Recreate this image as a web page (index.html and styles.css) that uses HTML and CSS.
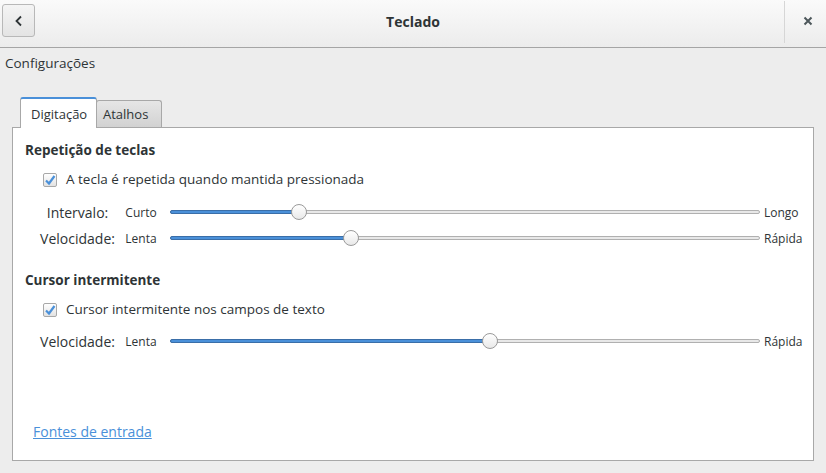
FILE: index.html
```html
<!DOCTYPE html>
<html lang="pt">
<head>
<meta charset="utf-8">
<title>Teclado</title>
<link rel="stylesheet" href="styles.css">
</head>
<body>
<div class="window">
  <header class="headerbar">
    <div class="hb-start">
      <button class="back-btn" aria-label="Voltar">
        <svg width="12" height="12" viewBox="0 0 12 12"><path d="M8 1.5 L3.5 6 L8 10.5" fill="none" stroke="#2e3436" stroke-width="1.8"/></svg>
      </button>
    </div>
    <div class="title">Teclado</div>
    <div class="hb-end">
      <div class="sep"></div>
      <button class="close-btn" aria-label="Fechar">
        <svg width="10" height="10" viewBox="0 0 10 10"><path d="M1.5 1.5 L8.5 8.5 M8.5 1.5 L1.5 8.5" stroke="#4d575b" stroke-width="2"/></svg>
      </button>
    </div>
  </header>

  <div class="section-title">Configurações</div>

  <div class="notebook">
    <div class="tabs">
      <div class="tab active">Digitação</div>
      <div class="tab">Atalhos</div>
    </div>
    <div class="page">
      <div class="group-title">Repetição de teclas</div>
      <label class="check-row">
        <span class="checkbox"><svg width="12" height="12" viewBox="0 0 12 12"><path d="M2 6.5 L5 9.5 L10.5 2" fill="none" stroke="#4a90d9" stroke-width="2.2"/></svg></span>
        A tecla é repetida quando mantida pressionada
      </label>
      <div class="slider-row first">
        <span class="lbl">Intervalo:</span>
        <span class="min">Curto</span>
        <div class="track"><div class="fill" style="width:128px"></div><div class="knob" style="left:128px"></div></div>
        <span class="max">Longo</span>
      </div>
      <div class="slider-row">
        <span class="lbl">Velocidade:</span>
        <span class="min">Lenta</span>
        <div class="track"><div class="fill" style="width:180px"></div><div class="knob" style="left:180px"></div></div>
        <span class="max">Rápida</span>
      </div>

      <div class="group-title second">Cursor intermitente</div>
      <label class="check-row">
        <span class="checkbox"><svg width="12" height="12" viewBox="0 0 12 12"><path d="M2 6.5 L5 9.5 L10.5 2" fill="none" stroke="#4a90d9" stroke-width="2.2"/></svg></span>
        Cursor intermitente nos campos de texto
      </label>
      <div class="slider-row first-b">
        <span class="lbl">Velocidade:</span>
        <span class="min">Lenta</span>
        <div class="track"><div class="fill" style="width:319px"></div><div class="knob" style="left:319px"></div></div>
        <span class="max">Rápida</span>
      </div>

      <a class="link" href="#">Fontes de entrada</a>
    </div>
  </div>
</div>
</body>
</html>
```

FILE: styles.css
```css
* { box-sizing: border-box; }
html, body { margin: 0; padding: 0; }
body {
  background: #ededed;
  font-family: "Open Sans", "Noto Sans", sans-serif;
  font-size: 13px;
  color: #2e3436;
  width: 826px;
  height: 473px;
  overflow: hidden;
}
.window { display: flex; flex-direction: column; height: 473px; }

.headerbar {
  height: 48px;
  display: grid;
  grid-template-columns: 1fr auto 1fr;
  align-items: start;
  background: linear-gradient(#fafafa, #ececec);
  border-bottom: 1px solid #a5a5a5;
}
.hb-start { display: flex; }
.hb-end { display: flex; justify-content: flex-end; }
.back-btn {
  margin: 4px 0 0 2px;
  width: 33px;
  height: 33px;
  border: 1px solid #b8b8b8;
  border-radius: 3px;
  background: linear-gradient(#f4f4f4, #e4e4e4);
  display: flex;
  align-items: center;
  justify-content: center;
  padding: 0;
}
.title {
  text-align: center;
  font-weight: bold;
  font-size: 14px;
  line-height: 44px;
  color: #2e3436;
}
.sep {
  width: 1px;
  height: 42px;
  margin-top: 1px;
  background: #d6d6d6;
}
.close-btn {
  width: 41px;
  height: 42px;
  border: none;
  background: transparent;
  display: flex;
  align-items: center;
  justify-content: center;
  padding: 0 0 0 4px;
}

.section-title {
  padding: 6px 0 0 5px;
  height: 48px;
  line-height: 19px;
  font-size: 13.5px;
}

.notebook { margin: 0 12px; display: flex; flex-direction: column; }
.tabs { display: flex; align-items: flex-end; padding-left: 9px; height: 31px; }
.tab {
  width: 66px;
  height: 27px;
  padding-left: 6px;
  line-height: 27px;
  border: 1px solid #a8a8a8;
  border-bottom: none;
  border-radius: 3px 3px 0 0;
  background: linear-gradient(#e6e6e6, #d2d2d2);
  margin-left: -1px;
}
.tab.active {
  width: 77px;
  height: 31px;
  line-height: 30px;
  background: #ffffff;
  border-top: 2px solid #4a90d9;
  padding-left: 10px;
  margin-bottom: -1px;
  position: relative;
  z-index: 1;
}
.page {
  background: #fff;
  border: 1px solid #a8a8a8;
  height: 334px;
  padding: 13px 0 0 12px;
  display: flex;
  flex-direction: column;
}
.group-title { font-weight: bold; line-height: 19px; font-size: 13.5px; }
.group-title.second { margin-top: 20px; }
.check-row {
  display: flex;
  align-items: center;
  gap: 9px;
  margin: 10px 0 0 18px;
  line-height: 19px;
  font-size: 13.5px;
}
.checkbox {
  width: 14px;
  height: 14px;
  border: 1px solid #a8a8a8;
  border-radius: 2px;
  background: linear-gradient(#ffffff, #e2e2e2);
  display: flex;
  align-items: center;
  justify-content: center;
}
.slider-row {
  display: flex;
  align-items: center;
  height: 26px;
}
.slider-row.first { margin-top: 10px; }
.slider-row.first-b { margin-top: 9px; }
.lbl { flex: none; width: 81px; margin-left: 12px; text-align: center; font-size: 14px; }
.min { flex: none; width: 38px; margin-left: 4px; text-align: center; font-size: 12px; }
.max { flex: none; width: 44px; margin-left: 4px; font-size: 12px; }
.track {
  flex: none;
  margin-left: 10px;
  width: 590px;
  height: 4px;
  border: 1px solid #b0b0b0;
  border-radius: 2px;
  background: #e8e8e8;
  position: relative;
}
.fill {
  position: absolute;
  left: -1px;
  top: -1px;
  height: 4px;
  background: #4a90d9;
  border: 1px solid #3a6ea8;
  border-radius: 2px;
}
.knob {
  position: absolute;
  top: -7px;
  width: 16px;
  height: 16px;
  margin-left: -8px;
  border-radius: 50%;
  border: 1px solid #9a9a9a;
  background: linear-gradient(#ffffff, #e9e9e9);
}
.link {
  margin-top: auto;
  margin-bottom: 19px;
  margin-left: 8px;
  color: #4a90d9;
  font-size: 14px;
  align-self: flex-start;
}
```
